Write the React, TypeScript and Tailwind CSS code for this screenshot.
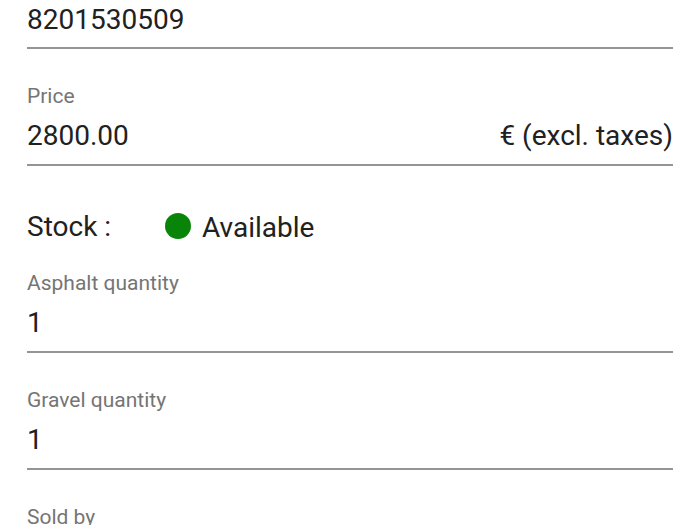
import React from "react";

function Field({ label, value, adornment }: { label: string; value: string; adornment?: string }) {
  return (
    <div className="mt-[37px] border-b-2 border-[#949494] pb-[12px]">
      <div className="text-[21px] leading-[21px] text-[#757575]">{label}</div>
      <div className="mt-[12px] flex justify-between text-[28px] leading-[33px] text-[#212121]">
        <span>{value}</span>
        {adornment && <span>{adornment}</span>}
      </div>
    </div>
  );
}

export default function App() {
  return (
    <div
      className="w-[700px] h-[525px] overflow-hidden bg-white px-[27px]"
      style={{ fontFamily: "Roboto, 'Noto Sans', sans-serif" }}
    >
      <div className="border-b-2 border-[#949494] pt-[3px] pb-[11px]">
        <div className="text-[28px] leading-[33px] text-[#212121]">8201530509</div>
      </div>
      <Field label="Price" value="2800.00" adornment="€ (excl. taxes)" />
      <div className="mt-[43px] flex items-center text-[28px] leading-[33px] text-[#212121]">
        <span className="w-[138px]">Stock :</span>
        <span className="h-[26px] w-[26px] rounded-full bg-[#088508] -mt-[2px]" />
        <span className="ml-[11px] mt-[2px]">Available</span>
      </div>
      <div className="mt-[-8px]">
        <Field label="Asphalt quantity" value="1" />
      </div>
      <Field label="Gravel quantity" value="1" />
      <div className="mt-[37px] text-[21px] leading-[21px] text-[#757575]">Sold by</div>
    </div>
  );
}
